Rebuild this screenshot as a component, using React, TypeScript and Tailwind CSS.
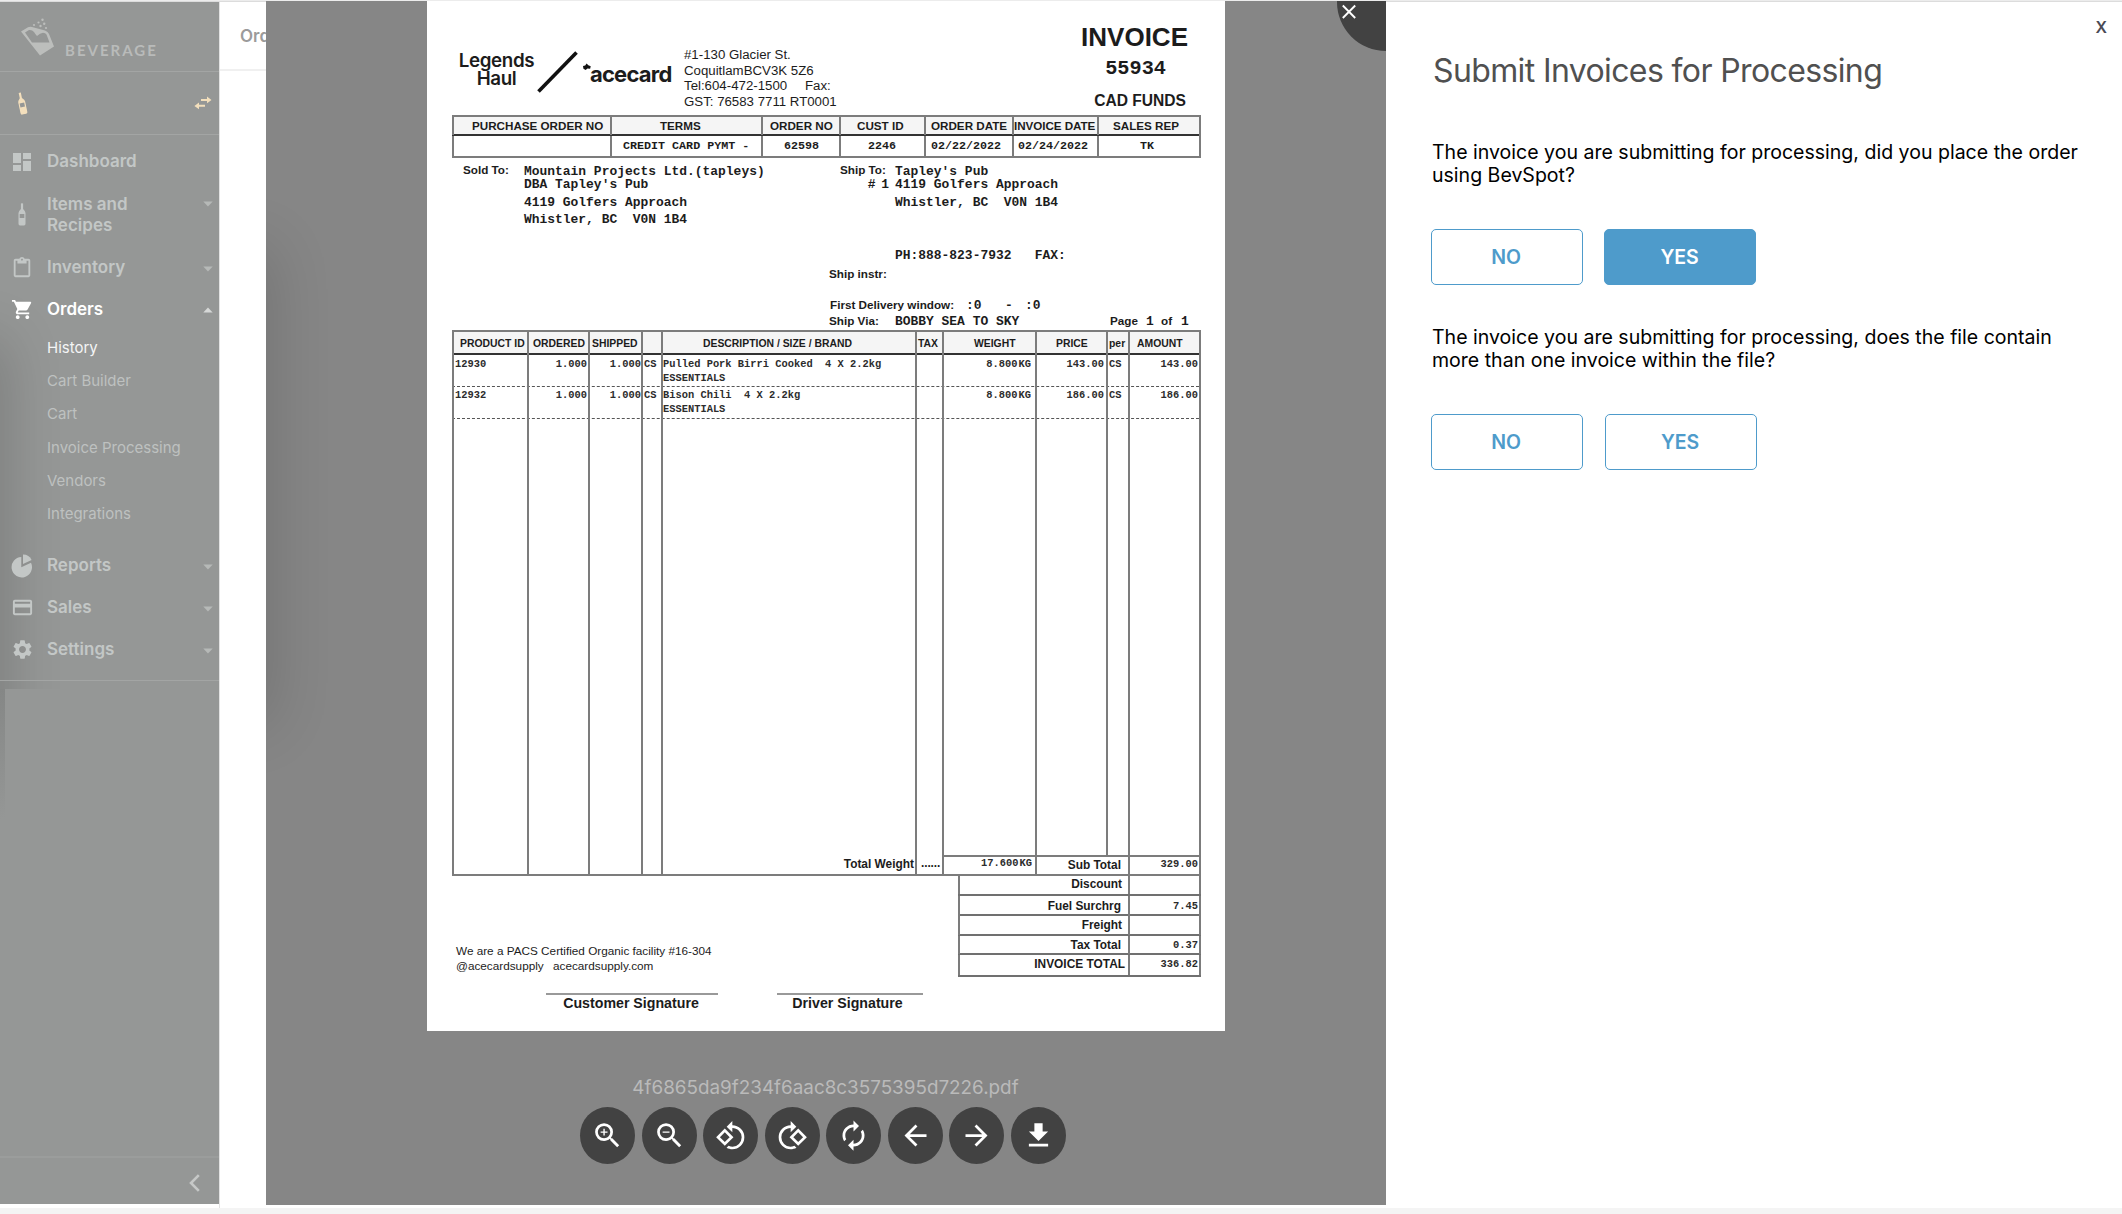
import type { ReactNode } from "react";
import {
  MdArrowBack,
  MdArrowForward,
  MdAutorenew,
  MdContentPaste,
  MdCreditCard,
  MdDashboard,
  MdRotate90DegreesCcw,
  MdSettings,
  MdShoppingCart,
  MdZoomIn,
  MdZoomOut,
} from "react-icons/md";

/* ---------- icons ---------- */

function LogoMark() {
  return (
    <svg width="36" height="40" viewBox="0 0 36 40" fill="#bcbebc">
      <path
        fillRule="evenodd"
        d="M1 13.5 8 9.300Q10 8.400 12 9L25 12.5Q28 13.5 29 16L34 28.500 20 37.500ZM5 14.500 12 24.500H29.500L26.500 16.500Q25.500 14.800 23 14.800 20 15 17 18 15.500 16.500 14 14 12 11.500 9 12Z"
      />
      <circle cx="14" cy="7" r="1.100" />
      <circle cx="18.500" cy="4.500" r="1.100" />
      <circle cx="22.500" cy="1.800" r="1.200" />
      <circle cx="20.500" cy="8" r="1.200" />
      <circle cx="24.200" cy="5.800" r="1.200" />
      <circle cx="26" cy="10" r="1.100" />
    </svg>
  );
}

function Bottle({ className }: { className: string }) {
  return (
    <svg width="8" height="23" viewBox="0 0 8 23" fill="currentColor" className={className}>
      <path
        fillRule="evenodd"
        d="M2.900.6Q4 0 5.100.6V6Q7.500 8.300 7.500 10V20.800Q7.500 22.400 6 22.400H2Q.5 22.400.5 20.800V10Q.5 8.300 2.900 6ZM1.700 10.900V15H6.300V10.900Z"
      />
    </svg>
  );
}

function SwapArrows() {
  return (
    <svg width="18" height="14" viewBox="0 0 18 14" fill="#f3dfbc">
      <path d="M7 2.900H13V.4L17.500 3.900 13 7.300V4.900H7ZM11 8.700H5V6.400L.4 9.900 5 13.300V10.700H11Z" />
    </svg>
  );
}

function Caret({ up = false }: { up?: boolean }) {
  return (
    <svg width="10" height="6" viewBox="0 0 10 6" fill={up ? "#d6d8d7" : "#b6b9b7"}>
      <path d={up ? "M.3 5.500 5 .5 9.700 5.500Z" : "M.3.500 5 5.500 9.700.500Z"} />
    </svg>
  );
}

function PieIcon() {
  return (
    <svg width="22" height="24" viewBox="0 0 22 24" fill="currentColor">
      <path d="M10.300 3V13.300L20 8.800A10.200 10.200 0 1 1 10.300 3Z" />
      <path d="M12 .5A9.300 9.300 0 0 1 20.600 6L12 10Z" />
    </svg>
  );
}

function DownloadIcon() {
  return (
    <svg width="33" height="33" viewBox="0 0 24 24" fill="currentColor">
      <path d="M19 9h-4V3H9v6H5l7 7 7-7zM5 18v2h14v-2H5z" />
    </svg>
  );
}

/* ---------- sidebar ---------- */

function NavRow({
  icon,
  label,
  className = "h-[41px] text-[#c3c7c6]",
  caret,
}: {
  icon: ReactNode;
  label: string;
  className?: string;
  caret?: "up" | "down";
}) {
  return (
    <div className={`flex items-center ${className}`}>
      <span className="flex w-[47px] justify-center pr-[3px]">{icon}</span>
      <span className="w-[110px] text-[17px] font-semibold leading-[21px]">{label}</span>
      {caret && (
        <span className="ml-[46px] self-start pt-[19px]">
          <Caret up={caret === "up"} />
        </span>
      )}
    </div>
  );
}

function Sidebar() {
  return (
    <aside className="relative mt-[2px] flex h-[1202px] w-[219px] shrink-0 flex-col overflow-hidden bg-[#959796]">
      <div className="absolute left-0 top-0 h-[687px] w-[60px] overflow-hidden">
        <div className="absolute -left-[40px] top-[350px] h-[500px] w-[34px] shadow-[0_0_56px_12px_rgba(0,0,0,0.18)]" />
      </div>
      <div className="absolute left-0 top-[687px] h-[130px] w-[5px] bg-gradient-to-b from-[#858786] to-[#959796]" />
      <div className="flex h-[70px] items-start border-b border-[#a3a5a4]">
        <span className="ml-[20px] mt-[16px]">
          <LogoMark />
        </span>
        <span className="ml-[9px] mt-[38px] font-['Lato'] text-[15px] font-bold leading-[20px] tracking-[2px] text-[#b9bbba]">
          BEVERAGE
        </span>
      </div>
      <div className="flex h-[63px] items-center justify-between border-b border-[#a3a5a4] pl-[18px] pr-[7px] text-[#f3dfbc]">
        <Bottle className="-rotate-12" />
        <SwapArrows />
      </div>
      <nav className="relative flex h-[546px] flex-col border-b border-[#a3a5a4] pt-[6px]">
        <NavRow icon={<MdDashboard size={24} />} label="Dashboard" />
        <NavRow
          icon={<Bottle className="" />}
          label="Items and Recipes"
          className="h-[65px] text-[#c3c7c6]"
          caret="down"
        />
        <NavRow icon={<MdContentPaste size={22} />} label="Inventory" caret="down" />
        <NavRow
          icon={<MdShoppingCart size={23} />}
          label="Orders"
          className="h-[42px] text-white"
          caret="up"
        />
        <ul className="mt-[1px] pl-[47px] text-[15px] leading-[33.200px] text-[#bec1c0]">
          <li className="text-[#f4f5f5]">History</li>
          <li>Cart Builder</li>
          <li>Cart</li>
          <li>Invoice Processing</li>
          <li>Vendors</li>
          <li>Integrations</li>
        </ul>
        <NavRow
          icon={<PieIcon />}
          label="Reports"
          className="mt-[14.500px] h-[42px] text-[#c3c7c6]"
          caret="down"
        />
        <NavRow
          icon={<MdCreditCard size={23} />}
          label="Sales"
          className="h-[42px] text-[#c3c7c6]"
          caret="down"
        />
        <NavRow
          icon={<MdSettings size={23} />}
          label="Settings"
          className="h-[42px] text-[#c3c7c6]"
          caret="down"
        />
      </nav>
      <div className="mt-auto flex h-[48px] items-center justify-end border-t-2 border-[#9b9d9c] pr-[19px] pt-[3px]">
        <svg width="11" height="18" viewBox="0 0 11 18" fill="none" stroke="#c6c8c7" strokeWidth="2.600">
          <path d="M9.800 1.200 2 9 9.800 16.800" />
        </svg>
      </div>
    </aside>
  );
}

/* ---------- invoice page ---------- */

const th = "border-l-2 border-[#7c7c7c] whitespace-pre";

function InvoiceHeader() {
  return (
    <div className="flex h-[114px] items-start">
      <div className="ml-[30px] mt-[51px] w-[79px] text-center font-['Inter'] text-[18.800px] font-semibold leading-[18px] tracking-[-0.4px]">
        Legends
        <br />
        Haul
      </div>
      <svg className="mt-[48px]" width="44" height="46" viewBox="0 0 44 46">
        <path d="M2.500 42.500 40.500 3.500" stroke="#111" strokeWidth="3.600" />
      </svg>
      <svg className="ml-[3px] mt-[62px]" width="8" height="8" viewBox="0 0 9 8" fill="#111">
        <path d="M4 0 6 2 8.700 3.200 8 6 5 5.700 3 7.300 .5 6 0 3 2.500 2.200Z" />
      </svg>
      <div className="-ml-px mt-[60px] w-[93px] font-['Inter'] text-[22px] font-bold leading-[26px] tracking-[-0.8px]">
        acecard
      </div>
      <div className="ml-[1px] mt-[46px] w-[396px] whitespace-pre text-[13.250px] leading-[15.500px]">
        <div>#1-130 Glacier St.</div>
        <div>CoquitlamBCV3K 5Z6</div>
        <div>
          <span className="inline-block w-[121px]">Tel:604-472-1500</span>Fax:
        </div>
        <div>GST: 76583 7711 RT0001</div>
      </div>
      <div className="mt-[21px] w-[108px] whitespace-nowrap text-right font-bold">
        <div className="text-[26px] leading-[30px]">INVOICE</div>
        <div className="pr-[22px] pt-[4px] font-['Liberation_Mono'] text-[20.300px] leading-[26px]">55934</div>
        <div className="pr-[2px] pt-[9px] text-[15.600px] leading-[20px]">CAD FUNDS</div>
      </div>
    </div>
  );
}

function OrderTable() {
  return (
    <div className="ml-[25px] w-[749px] border-b-2 border-r-2 border-t-2 border-[#7c7c7c]">
      <div className="grid h-[19px] grid-cols-[158px_151px_78px_85px_88px_85px_102px] border-b-2 border-[#333] bg-[#f5f5f5] text-[11.650px] font-bold leading-[18px]">
        <div className={`${th} pl-[18px]`}>PURCHASE ORDER NO</div>
        <div className={`${th} pl-[48px]`}>TERMS</div>
        <div className={`${th} pl-[7px]`}>ORDER NO</div>
        <div className={`${th} pl-[16px]`}>CUST ID</div>
        <div className={`${th} pl-[5px]`}>ORDER DATE</div>
        <div className={`${th} tracking-[-0.05px]`}>INVOICE DATE</div>
        <div className={`${th} pl-[14px]`}>SALES REP</div>
      </div>
      <div className="grid h-[20px] grid-cols-[158px_151px_78px_85px_88px_85px_102px] font-['Liberation_Mono'] text-[11.700px] font-bold leading-[20px]">
        <div className={th} />
        <div className={`${th} pl-[11px]`}>CREDIT CARD PYMT -</div>
        <div className={`${th} pl-[21px]`}>62598</div>
        <div className={`${th} pl-[27px]`}>2246</div>
        <div className={`${th} pl-[5px]`}>02/22/2022</div>
        <div className={`${th} pl-[4px]`}>02/24/2022</div>
        <div className={`${th} pl-[41px]`}>TK</div>
      </div>
    </div>
  );
}

const mono = "font-['Liberation_Mono'] text-[12.950px]";

function Addresses() {
  return (
    <div className="h-[172px] whitespace-pre text-[11.700px] font-bold">
      <div className="flex h-[75px] items-start pt-[5px]">
        <div className="ml-[36px] w-[61px] leading-[13px]">Sold To:</div>
        <div className={`w-[316px] ${mono}`}>
          <div className="pt-[2px] leading-[13px]">Mountain Projects Ltd.(tapleys)</div>
          <div className="leading-[13px]">DBA Tapley's Pub</div>
          <div className="pt-[3px] leading-[17px]">4119 Golfers Approach</div>
          <div className="leading-[17px]">Whistler, BC  V0N 1B4</div>
        </div>
        <div className="w-[55px]">
          <div className="leading-[13px]">Ship To:</div>
          <div className={`pr-[7px] pt-[2px] text-right leading-[13px] ${mono} tracking-[-1px]`}># 1</div>
        </div>
        <div className={mono}>
          <div className="pt-[2px] leading-[13px]">Tapley's Pub</div>
          <div className="leading-[13px]">4119 Golfers Approach</div>
          <div className="pt-[3px] leading-[17px]">Whistler, BC  V0N 1B4</div>
        </div>
      </div>
      <div className={`ml-[468px] mt-[14px] leading-[18px] ${mono}`}>PH:888-823-7932   FAX:</div>
      <div className="ml-[402px] leading-[18px]">Ship instr:</div>
      <div className="ml-[403px] mt-[14px] flex items-baseline leading-[16px]">
        <span className="w-[136px]">First Delivery window:</span>
        <span className={`w-[39px] leading-[16px] ${mono}`}>:0</span>
        <span className={`w-[20px] leading-[16px] ${mono}`}>-</span>
        <span className={`leading-[16px] ${mono}`}>:0</span>
      </div>
      <div className="-mt-px ml-[402px] flex items-baseline leading-[16px]">
        <span className="w-[66px]">Ship Via:</span>
        <span className={`w-[215px] leading-[16px] ${mono}`}>BOBBY SEA TO SKY</span>
        <span className="w-[36px]">Page</span>
        <span className={`w-[15px] leading-[16px] ${mono}`}>1</span>
        <span className="w-[20px]">of</span>
        <span className={`leading-[16px] ${mono}`}>1</span>
      </div>
    </div>
  );
}

function ItemRow({ id, name, weight, price }: { id: string; name: string; weight: string; price: string }) {
  return (
    <div className="grid h-[31px] grid-cols-[75px_61px_53px_20px_254px_27px_93px_71px_22px_71px] font-['Liberation_Mono'] text-[10.400px] font-semibold leading-[14px] text-[#2c2c2c]">
      <div className={`${th} pl-[1px] pt-[2px]`}>{id}</div>
      <div className={`${th} pr-px pt-[2px] text-right`}>1.000</div>
      <div className={`${th} pt-[2px] text-right`}>1.000</div>
      <div className={`${th} pl-[1px] pt-[2px]`}>CS</div>
      <div className={`${th} pt-[2px]`}>
        {name}
        <br />
        ESSENTIALS
      </div>
      <div className={th} />
      <div className={`${th} flex justify-end gap-px pr-[4px] pt-[2px]`}>
        <span>{weight}</span>
        <span>KG</span>
      </div>
      <div className={`${th} pr-[2px] pt-[2px] text-right`}>{price}</div>
      <div className={`${th} pl-[1px] pt-[2px]`}>CS</div>
      <div className={`${th} pr-[1px] pt-[2px] text-right`}>{price}</div>
    </div>
  );
}

function ItemsTable() {
  return (
    <div className="ml-[25px] flex h-[546px] w-[749px] flex-col border-b-2 border-r-2 border-t-2 border-[#7c7c7c]">
      <div className="grid h-[23px] grid-cols-[75px_61px_53px_20px_254px_27px_93px_71px_22px_71px] border-b-2 border-[#333] bg-[#f5f5f5] text-[10.400px] font-bold leading-[23px]">
        <div className={`${th} pl-[6px]`}>PRODUCT ID</div>
        <div className={`${th} pl-[4px]`}>ORDERED</div>
        <div className={`${th} pl-[2px]`}>SHIPPED</div>
        <div className={th} />
        <div className={`${th} pl-[40px]`}>DESCRIPTION / SIZE / BRAND</div>
        <div className={`${th} pl-[1px]`}>TAX</div>
        <div className={`${th} pl-[30px]`}>WEIGHT</div>
        <div className={`${th} pl-[19px]`}>PRICE</div>
        <div className={`${th} pl-[1px]`}>per</div>
        <div className={`${th} pl-[7px]`}>AMOUNT</div>
      </div>
      <ItemRow id="12930" name="Pulled Pork Birri Cooked  4 X 2.2kg" weight="8.800" price="143.00" />
      <div className="border-t border-dashed border-[#555]" />
      <div className="-mt-px">
        <ItemRow id="12932" name="Bison Chili  4 X 2.2kg" weight="8.800" price="186.00" />
      </div>
      <div className="grid h-px grid-cols-[75px_61px_53px_20px_254px_27px_93px_71px_22px_71px]">
        <div className={th} />
        <div className={th} />
        <div className={th} />
        <div className={th} />
        <div className={th} />
        <div className={th} />
        <div className={th} />
        <div className={th} />
        <div className={th} />
        <div className={th} />
      </div>
      <div className="border-t border-dashed border-[#555]" />
      <div className="-mt-px grid flex-1 grid-cols-[75px_61px_53px_20px_254px_27px_93px_71px_22px_71px]">
        <div className={th} />
        <div className={th} />
        <div className={th} />
        <div className={th} />
        <div className={th} />
        <div className={th} />
        <div className={`${th} border-b-2`} />
        <div className={`${th} border-b-2`} />
        <div className={`${th} border-b-2`} />
        <div className={`${th} border-b-2`} />
      </div>
      <div className="grid h-[17px] grid-cols-[75px_61px_53px_20px_254px_27px_93px_93px_71px] text-[11.900px] font-bold leading-[16px]">
        <div className={th} />
        <div className={th} />
        <div className={th} />
        <div className={th} />
        <div className={`${th} -mt-[3px] pr-px pt-[3px] text-right leading-[14px]`}>Total Weight</div>
        <div className={`${th} pl-[4px] leading-[12px] tracking-[-0.1px]`}>......</div>
        <div
          className={`${th} flex justify-end gap-px pr-[3px] font-['Liberation_Mono'] text-[10.400px] leading-[12px] text-[#2c2c2c]`}
        >
          <span>17.600</span>
          <span>KG</span>
        </div>
        <div className={`${th} pr-[7px] text-right`}>Sub Total</div>
        <div className={`${th} pr-px text-right font-['Liberation_Mono'] text-[10.400px] leading-[15px] text-[#2c2c2c]`}>
          329.00
        </div>
      </div>
    </div>
  );
}

function TotalRow({
  label,
  value,
  className,
  labelClass = "pr-[6px]",
}: {
  label: string;
  value: string;
  className: string;
  labelClass?: string;
}) {
  return (
    <div
      className={`grid grid-cols-[170px_73px] border-b-2 border-[#707070] text-right text-[11.900px] font-bold ${className}`}
    >
      <div className={`${th} ${labelClass}`}>{label}</div>
      <div className={`${th} border-r-2 pr-[1px] font-['Liberation_Mono'] text-[10.400px] text-[#2c2c2c]`}>{value}</div>
    </div>
  );
}

function InvoicePage() {
  return (
    <div className="ml-[161px] h-[1030px] w-[798px] overflow-hidden bg-white font-['Liberation_Sans'] text-[#1c1c1c]">
      <InvoiceHeader />
      <OrderTable />
      <Addresses />
      <ItemsTable />
      <div className="flex h-[101px]">
        <div className="ml-[29px] mt-[68px] w-[502px] whitespace-pre text-[11.750px] leading-[14.500px]">
          <div>We are a PACS Certified Organic facility #16-304</div>
          <div>
            <span className="inline-block w-[97px]">@acecardsupply</span>acecardsupply.com
          </div>
        </div>
        <div className="w-[243px]">
          <TotalRow label="Discount" value="" className="h-[20px] leading-[17px]" />
          <TotalRow label="Fuel Surchrg" value="7.45" className="h-[20px] leading-[20px]" labelClass="pr-[7px]" />
          <TotalRow label="Freight" value="" className="h-[20px] leading-[19px]" />
          <TotalRow label="Tax Total" value="0.37" className="h-[19px] leading-[18px]" labelClass="pr-[7px]" />
          <TotalRow label="INVOICE TOTAL" value="336.82" className="h-[22px] leading-[18px]" labelClass="pr-[3px]" />
        </div>
      </div>
      <div className="mt-[16px] flex text-center text-[14.200px] font-bold leading-[17px]">
        <div className="ml-[119px] w-[172px] border-t-2 border-[#999] pr-[2px]">Customer Signature</div>
        <div className="ml-[59px] w-[146px] border-t-2 border-[#999] pr-[5px]">Driver Signature</div>
      </div>
    </div>
  );
}

/* ---------- viewer ---------- */

function ToolButton({ children }: { children: ReactNode }) {
  return (
    <button className="flex h-[57px] w-[55px] items-center justify-center rounded-[50%] bg-[#424242] text-white">
      {children}
    </button>
  );
}

function Viewer() {
  return (
    <section className="relative mt-px h-[1204px] w-[1120px] shrink-0 overflow-hidden bg-[#868686]">
      <div className="absolute -left-[50px] top-[260px] h-[450px] w-[44px] shadow-[0_0_60px_12px_rgba(0,0,0,0.15)]" />
      <button className="absolute -right-[49px] -top-[49px] h-[99px] w-[98px] rounded-full bg-[#424242]">
        <svg className="absolute left-[4px] top-[52px]" width="16" height="16" viewBox="0 0 16 16" stroke="#fff" strokeWidth="1.900">
          <path d="M1.800 1.500 14.200 14M14.200 1.500 1.800 14" />
        </svg>
      </button>
      <InvoicePage />
      <div className="mt-[45px] w-[1120px] pr-px text-center text-[18.850px] leading-[24px] text-[#bababa]">
        4f6865da9f234f6aac8c3575395d7226.pdf
      </div>
      <div className="mt-[7px] flex gap-[6.500px] pl-[314px]">
        <ToolButton>
          <MdZoomIn size={33} />
        </ToolButton>
        <ToolButton>
          <MdZoomOut size={33} />
        </ToolButton>
        <ToolButton>
          <MdRotate90DegreesCcw size={32} />
        </ToolButton>
        <ToolButton>
          <MdRotate90DegreesCcw size={32} className="-scale-x-100" />
        </ToolButton>
        <ToolButton>
          <MdAutorenew size={33} />
        </ToolButton>
        <ToolButton>
          <MdArrowBack size={33} />
        </ToolButton>
        <ToolButton>
          <MdArrowForward size={33} />
        </ToolButton>
        <ToolButton>
          <DownloadIcon />
        </ToolButton>
      </div>
    </section>
  );
}

/* ---------- right panel ---------- */

function ChoiceButton({ label, filled = false }: { label: string; filled?: boolean }) {
  return (
    <button
      className={`h-[56px] w-[152px] rounded-[5px] border pt-[1px] text-[19.500px] font-semibold tracking-[-0.2px] ${
        filled ? "border-[#4e9bcb] bg-[#4e9bcb] text-white" : "border-[#4e9bcb] bg-white pr-[2px] text-[#4e9bcb]"
      }`}
    >
      {label}
    </button>
  );
}

function SubmitPanel() {
  return (
    <section className="mt-[2px] h-[1204px] w-[734px] shrink-0 bg-white pl-[45px] text-black">
      <div className="flex justify-end pr-[13px] pt-[14px] text-[16px] font-semibold leading-[22px] text-[#4a4a55]">X</div>
      <h1 className="mt-[12px] pl-[2px] text-[32px] leading-[42px] tracking-[-0.620px] text-[#505050]">
        Submit Invoices for Processing
      </h1>
      <p className="mt-[49px] w-[670px] pl-px text-[19.550px] leading-[23px]">
        The invoice you are submitting for processing, did you place the order
        <br />
        using BevSpot?
      </p>
      <div className="mt-[42px] flex gap-[20.500px]">
        <ChoiceButton label="NO" />
        <ChoiceButton label="YES" filled />
      </div>
      <p className="mt-[41px] w-[670px] pl-px text-[19.550px] leading-[23px]">
        The invoice you are submitting for processing, does the file contain
        <br />
        more than one invoice within the file?
      </p>
      <div className="mt-[42px] flex gap-[22px]">
        <ChoiceButton label="NO" />
        <ChoiceButton label="YES" />
      </div>
    </section>
  );
}

export default function App() {
  return (
    <div className="h-[1214px] w-[2122px] overflow-hidden bg-[#f4f4f4] font-['Inter']">
      <div className="flex h-[1208px] bg-white shadow-[inset_0_1px_0_#ececec,inset_0_2px_0_#dcdcdc]">
        <Sidebar />
        <div className="mt-[2px] w-[47px] shrink-0 overflow-hidden border-l border-[#e2e2e2] bg-white">
          <div className="h-[69px] border-b-2 border-[#f0f0f0] pl-[20px] pt-[23px] text-[17px] font-semibold leading-[22px] text-[#9b9b9b]">
            Ord
          </div>
        </div>
        <Viewer />
        <SubmitPanel />
      </div>
    </div>
  );
}
